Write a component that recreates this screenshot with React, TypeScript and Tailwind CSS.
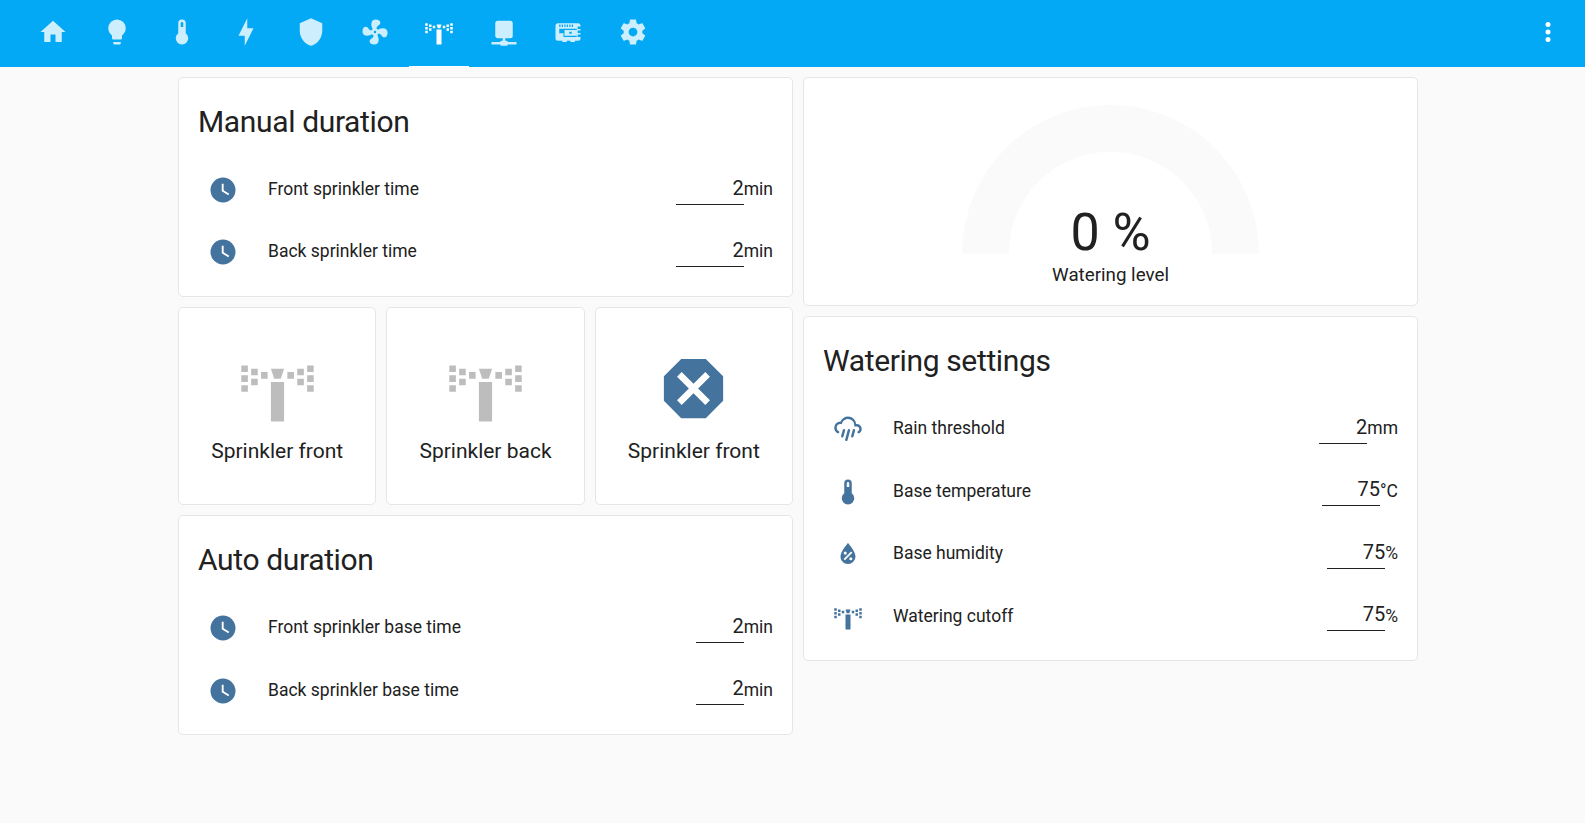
import React from "react";

const paths = {
  home: "M10,20V14H14V20H19V12H22L12,3L2,12H5V20H10Z",
  bulb: "M12,2A7,7 0 0,0 5,9C5,11.38 6.19,13.47 8,14.74V17A1,1 0 0,0 9,18H15A1,1 0 0,0 16,17V14.74C17.81,13.47 19,11.38 19,9A7,7 0 0,0 12,2M9,21A1,1 0 0,0 10,22H14A1,1 0 0,0 15,21V20H9V21Z",
  thermometer: "M15 13V5A3 3 0 0 0 9 5V13A5 5 0 1 0 15 13M12 4A1 1 0 0 1 13 5V8H11V5A1 1 0 0 1 12 4Z",
  bolt: "M11 15H6L13 1V9H18L11 23V15Z",
  shield: "M12,1L3,5V11C3,16.55 6.84,21.74 12,23C17.16,21.74 21,16.55 21,11V5L12,1Z",
  fan: "M12,11A1,1 0 0,0 11,12A1,1 0 0,0 12,13A1,1 0 0,0 13,12A1,1 0 0,0 12,11M12.5,2C17,2 17.11,5.57 14.75,6.75C13.76,7.24 13.32,8.29 13.13,9.22C13.61,9.42 14.03,9.73 14.35,10.13C18.05,8.13 22.03,8.92 22.03,12.5C22.03,17 18.46,17.1 17.28,14.73C16.78,13.74 15.72,13.3 14.79,13.11C14.59,13.59 14.28,14 13.88,14.34C15.87,18.03 15.08,22 11.5,22C7,22 6.91,18.42 9.27,17.24C10.25,16.75 10.69,15.71 10.89,14.79C10.4,14.59 9.97,14.27 9.65,13.87C5.96,15.85 2,15.07 2,11.5C2,7 5.56,6.89 6.74,9.26C7.24,10.25 8.29,10.68 9.22,10.87C9.41,10.39 9.73,9.97 10.14,9.65C8.15,5.96 8.94,2 12.5,2Z",
  sprinkler:
    "M1,5H3V7H1ZM1,8H3V10H1ZM1,11H3V13H1ZM4,6H6V8H4ZM4,9H6V11H4ZM7,7H9V9H7ZM10,6H14L13,9H11ZM10,10H14V22H10ZM15,7H17V9H15ZM18,6H20V8H18ZM18,9H20V11H18ZM21,5H23V7H21ZM21,8H23V10H21ZM21,11H23V13H21Z",
  network:
    "M17,3A2,2 0 0,1 19,5V15A2,2 0 0,1 17,17H13V19H14A1,1 0 0,1 15,20H22V22H15A1,1 0 0,1 14,23H10A1,1 0 0,1 9,22H2V20H9A1,1 0 0,1 10,19H11V17H7C5.89,17 5,16.1 5,15V5A2,2 0 0,1 7,3H17Z",
  board:
    "M4,5H20A2,2 0 0 1 22,7V7.5H19.7V9.5H22V10.7H19.7V12.8H22V14H19.7V16H22V17A2,2 0 0 1 20,19H17.5V20H14V19H11V20H7.5V19H4A2,2 0 0 1 2,17V7A2,2 0 0 1 4,5ZM5,6V8H6V6ZM7,6V8H8V6ZM9,6V8H10V6ZM11,6V8H12V6ZM13,6V8H14V6ZM15,6V8H16V6ZM5,9.4V13H8.4V16H19V15H9.2V10.4H19V9.4ZM13,11.7V13.3H15V11.7Z",
  cog: "M12,15.5A3.5,3.5 0 0,1 8.5,12A3.5,3.5 0 0,1 12,8.5A3.5,3.5 0 0,1 15.5,12A3.5,3.5 0 0,1 12,15.5M19.43,12.97C19.47,12.65 19.5,12.33 19.5,12C19.5,11.67 19.47,11.34 19.43,11L21.54,9.37C21.73,9.22 21.78,8.95 21.66,8.73L19.66,5.27C19.54,5.05 19.27,4.96 19.05,5.05L16.56,6.05C16.04,5.66 15.5,5.32 14.87,5.07L14.5,2.42C14.46,2.18 14.25,2 14,2H10C9.75,2 9.54,2.18 9.5,2.42L9.13,5.07C8.5,5.32 7.96,5.66 7.44,6.05L4.95,5.05C4.73,4.96 4.46,5.05 4.34,5.27L2.34,8.73C2.21,8.95 2.27,9.22 2.46,9.37L4.57,11C4.53,11.34 4.5,11.67 4.5,12C4.5,12.33 4.53,12.65 4.57,12.97L2.46,14.63C2.27,14.78 2.21,15.05 2.34,15.27L4.34,18.73C4.46,18.95 4.73,19.03 4.95,18.95L7.44,17.94C7.96,18.34 8.5,18.68 9.13,18.93L9.5,21.58C9.54,21.82 9.75,22 10,22H14C14.25,22 14.46,21.82 14.5,21.58L14.87,18.93C15.5,18.67 16.04,18.34 16.56,17.94L19.05,18.95C19.27,19.03 19.54,18.95 19.66,18.73L21.66,15.27C21.78,15.05 21.73,14.78 21.54,14.63L19.43,12.97Z",
  clock:
    "M12,2A10,10 0 0,0 2,12A10,10 0 0,0 12,22A10,10 0 0,0 22,12A10,10 0 0,0 12,2M16.2,16.2L11,13V7H12.5V12.2L17,14.9L16.2,16.2Z",
  rain: "M9,12C9.53,12.14 9.85,12.69 9.71,13.22L8.41,18.05C8.27,18.59 7.72,18.9 7.19,18.76C6.65,18.62 6.34,18.07 6.5,17.54L7.78,12.71C7.92,12.17 8.47,11.86 9,12M13,12C13.53,12.14 13.85,12.69 13.71,13.22L11.64,20.95C11.5,21.5 10.95,21.8 10.41,21.66C9.88,21.5 9.56,20.97 9.7,20.43L11.78,12.71C11.92,12.17 12.47,11.86 13,12M17,12C17.53,12.14 17.85,12.69 17.71,13.22L16.41,18.05C16.27,18.59 15.72,18.9 15.19,18.76C14.65,18.62 14.34,18.07 14.5,17.54L15.78,12.71C15.92,12.17 16.47,11.86 17,12M17,10V9A5,5 0 0,0 12,4C9.5,4 7.45,5.82 7.06,8.19C6.73,8.07 6.37,8 6,8A3,3 0 0,0 3,11C3,12.11 3.6,13.08 4.5,13.6V13.59C5,13.87 5.14,14.5 4.87,14.96C4.59,15.43 4,15.6 3.5,15.32V15.33C2,14.47 1,12.85 1,11A5,5 0 0,1 6,6C7,3.65 9.3,2 12,2C15.43,2 18.24,4.66 18.5,8.03L19,8A4,4 0 0,1 23,12C23,13.5 22.2,14.77 21,15.46V15.46C20.5,15.73 19.91,15.57 19.63,15.09C19.36,14.61 19.5,14 20,13.72V13.73C20.6,13.39 21,12.74 21,12A2,2 0 0,0 19,10H17Z",
  humidity:
    "M12,3.25C12,3.25 6,10 6,14C6,17.32 8.69,20 12,20A6,6 0 0,0 18,14C18,10 12,3.25 12,3.25M14.47,9.97L15.53,11.03L9.53,17.03L8.47,15.97M9.75,10A1.25,1.25 0 0,1 11,11.25A1.25,1.25 0 0,1 9.75,12.5A1.25,1.25 0 0,1 8.5,11.25A1.25,1.25 0 0,1 9.75,10M14.25,14.5A1.25,1.25 0 0,1 15.5,15.75A1.25,1.25 0 0,1 14.25,17A1.25,1.25 0 0,1 13,15.75A1.25,1.25 0 0,1 14.25,14.5Z",
  closeOctagon:
    "M8.27,3L3,8.27V15.73L8.27,21H15.73L21,15.73V8.27L15.73,3M8.41,7L12,10.59L15.59,7L17,8.41L13.41,12L17,15.59L15.59,17L12,13.41L8.41,17L7,15.59L10.59,12L7,8.41",
  dots: "M12,16A2,2 0 0,1 14,18A2,2 0 0,1 12,20A2,2 0 0,1 10,18A2,2 0 0,1 12,16M12,10A2,2 0 0,1 14,12A2,2 0 0,1 12,14A2,2 0 0,1 10,12A2,2 0 0,1 12,10M12,4A2,2 0 0,1 14,6A2,2 0 0,1 12,8A2,2 0 0,1 10,6A2,2 0 0,1 12,4Z",
};

type IconName = keyof typeof paths;

function Icon({ name, className }: { name: IconName; className: string }) {
  return (
    <svg viewBox="0 0 24 24" className={className} fill="currentColor" fillRule="evenodd" aria-hidden="true">
      <path d={paths[name]} />
    </svg>
  );
}

const tabs: IconName[] = ["home", "bulb", "thermometer", "bolt", "shield", "fan", "sprinkler", "network", "board", "cog"];

function Header() {
  return (
    <header className="flex h-[67px] justify-between bg-[#03a9f4] text-white">
      <nav className="flex pl-[20.9px]">
        {tabs.map((tab) => {
          const active = tab === "sprinkler";
          return (
            <button
              key={tab}
              className={
                "flex w-[64.4px] flex-col items-center justify-between pt-[17px] " +
                (active ? "text-white" : "text-white/80")
              }
            >
              <Icon name={tab} className="size-[30px]" />
              {active && <span className="h-px w-[60px] bg-white" />}
            </button>
          );
        })}
      </nav>
      <button className="mr-[22px] flex items-start pt-[17px]">
        <Icon name="dots" className="size-[30px]" />
      </button>
    </header>
  );
}

const cardClass = "rounded-[5px] border border-[#e6e6e6] bg-white";

type Row = { icon: IconName; label: string; value: string; unit: string; width: string };

type EntitiesCardProps = { title: string; rows: Row[]; className: string; rowClass: string };

function EntitiesCard({ title, rows, className, rowClass }: EntitiesCardProps) {
  return (
    <section className={cardClass + " " + className}>
      <h1 className="h-[81px] pt-[19px] pl-[19px] text-[30px] leading-[50px] tracking-[-0.012em]">{title}</h1>
      {rows.map((row) => (
        <div key={row.label} className={"flex items-center pr-[19px] pl-[29px] " + rowClass}>
          <Icon name={row.icon} className="size-[30px] shrink-0 text-[#44739e]" />
          <span className="ml-[30px] grow pb-[2px] text-[17.5px] leading-6">{row.label}</span>
          <span className={"mb-[2.6px] border-b border-[#212121] text-right text-[20px] leading-[31px] " + row.width}>
            {row.value}
          </span>
          <span className="pb-[2px] text-[17.5px] leading-6">{row.unit}</span>
        </div>
      ))}
    </section>
  );
}

function ButtonCard({ icon, label, color }: { icon: IconName; label: string; color: string }) {
  return (
    <button className={cardClass + " flex h-[198px] flex-col items-center pt-[41px]"}>
      <Icon name={icon} className={"size-[79px] " + color} />
      <span className="mt-[10.5px] text-[21px] leading-6">{label}</span>
    </button>
  );
}

function GaugeCard() {
  return (
    <section className={cardClass + " flex h-[229px] flex-col items-center pt-[27px]"}>
      <div className="grid">
        <svg width="297" height="148.5" viewBox="0 0 298 149" className="col-start-1 row-start-1" aria-hidden="true">
          <path d="M0,149A149,149 0 0 1 298,149H251A102,102 0 0 0 47,149Z" fill="#fafafa" />
        </svg>
        <div className="col-start-1 row-start-1 self-end text-center text-[52px] leading-[42px]">0 %</div>
      </div>
      <div className="mt-[9.5px] text-[18.75px] leading-6">Watering level</div>
    </section>
  );
}

export default function App() {
  return (
    <div className="min-h-screen bg-[#fafafa] font-['Roboto',sans-serif] text-[#212121]">
      <Header />
      <main className="flex items-start gap-[10px] pt-[10px] pl-[178px]">
        <div className="flex w-[615px] flex-col">
          <EntitiesCard
            title="Manual duration"
            className="h-[220px]"
            rowClass="h-[62.2px]"
            rows={[
              { icon: "clock", label: "Front sprinkler time", value: "2", unit: "min", width: "w-[68px]" },
              { icon: "clock", label: "Back sprinkler time", value: "2", unit: "min", width: "w-[68px]" },
            ]}
          />
          <div className="my-[10px] grid grid-cols-3 gap-[10px]">
            <ButtonCard icon="sprinkler" label="Sprinkler front" color="text-[#bdbdbd]" />
            <ButtonCard icon="sprinkler" label="Sprinkler back" color="text-[#bdbdbd]" />
            <ButtonCard icon="closeOctagon" label="Sprinkler front" color="text-[#44739e]" />
          </div>
          <EntitiesCard
            title="Auto duration"
            className="h-[220px]"
            rowClass="h-[62.4px]"
            rows={[
              { icon: "clock", label: "Front sprinkler base time", value: "2", unit: "min", width: "w-12" },
              { icon: "clock", label: "Back sprinkler base time", value: "2", unit: "min", width: "w-12" },
            ]}
          />
        </div>
        <div className="flex w-[615px] flex-col gap-[10px]">
          <GaugeCard />
          <EntitiesCard
            title="Watering settings"
            className="h-[345px]"
            rowClass="h-[62.5px]"
            rows={[
              { icon: "rain", label: "Rain threshold", value: "2", unit: "mm", width: "w-12" },
              { icon: "thermometer", label: "Base temperature", value: "75", unit: "°C", width: "w-[58px]" },
              { icon: "humidity", label: "Base humidity", value: "75", unit: "%", width: "w-[58px]" },
              { icon: "sprinkler", label: "Watering cutoff", value: "75", unit: "%", width: "w-[58px]" },
            ]}
          />
        </div>
      </main>
    </div>
  );
}
